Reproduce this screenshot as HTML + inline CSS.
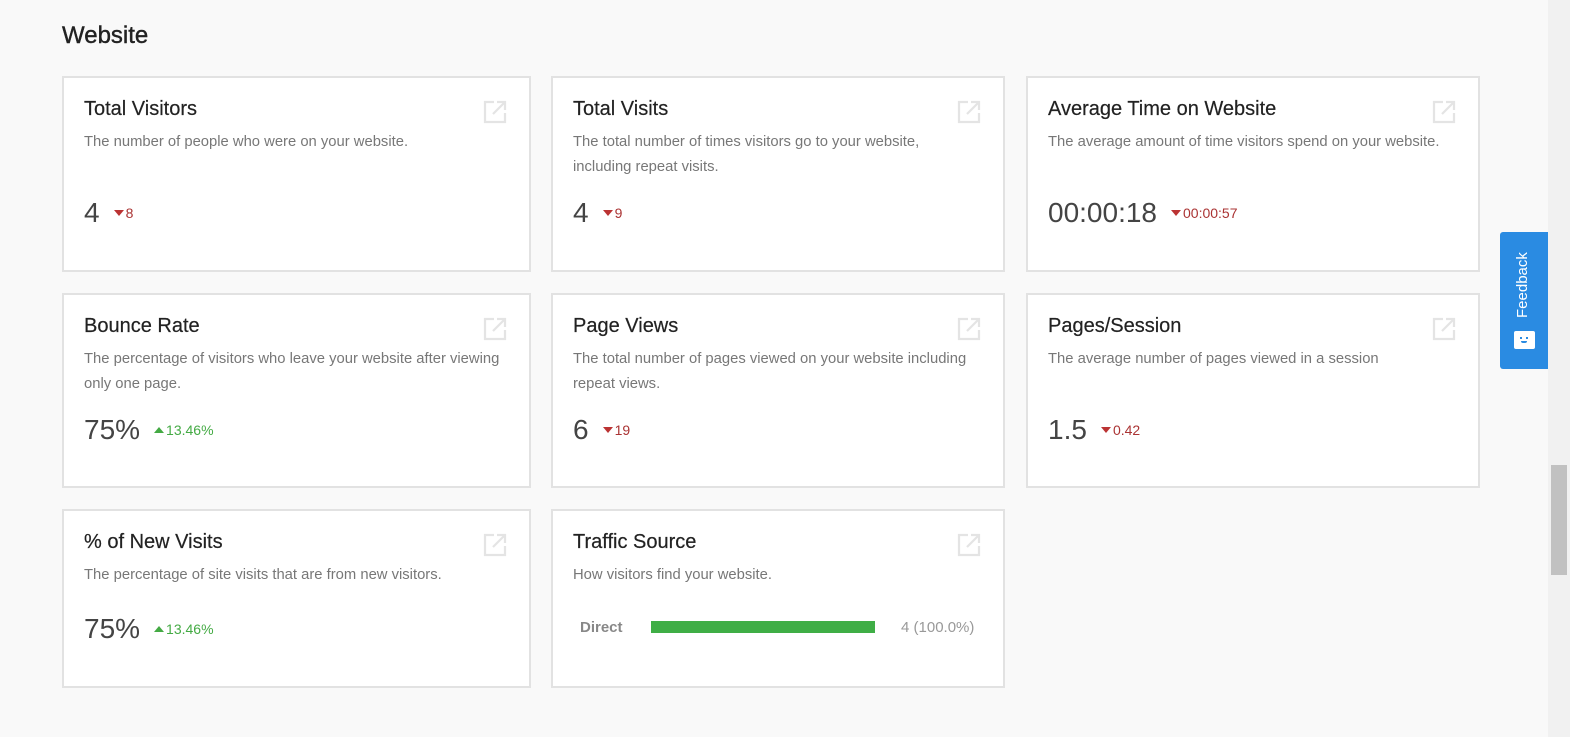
<!DOCTYPE html><html><head><style>
body{margin:0;width:1570px;height:737px;background:#f9f9f9;font-family:"Liberation Sans",sans-serif;position:relative;overflow:hidden}
h1{position:absolute;left:62px;top:22px;margin:0;font-size:24px;font-weight:normal;color:#222;-webkit-text-stroke:.4px #222}
.c{position:absolute;background:#fff;border:2px solid #e2e2e2;box-sizing:border-box}
.t{position:absolute;left:20px;top:20px;font-size:20px;color:#222;-webkit-text-stroke:.2px #222}
.d{position:absolute;left:20px;top:52px;right:30px;font-size:14.8px;color:#777;line-height:25px}
.v{position:absolute;left:20px;font-size:28px;color:#444;white-space:nowrap}
.v span{font-size:14px;margin-left:14px;vertical-align:4px}
.v span:before{content:"";display:inline-block;border-left:5px solid transparent;border-right:5px solid transparent;margin-right:2px;vertical-align:2px}
.dn{color:#a33}.dn:before{border-top:6px solid #b33}
.up{color:#4a4}.up:before{border-bottom:6px solid #4a4}
.i{position:absolute;right:22px;top:22px}
.sb{position:absolute;left:1548px;top:0;width:22px;height:737px;background:#f1f1f1}
.th{position:absolute;left:1551px;top:465px;width:16px;height:110px;background:#c1c1c1}
.fb{position:absolute;left:1500px;top:232px;width:48px;height:137px;background:#2a8be2;border-radius:3px 0 0 3px}
</style></head><body>
<h1>Website</h1>
<svg width="0" height="0" style="position:absolute"><defs><symbol id="ic" viewBox="0 0 24 24"><path d="M11 2H2v20h20v-9" fill="none" stroke="#e4e4e4" stroke-width="2.2"/><path d="M14 2h8v8M22 2L10 14" fill="none" stroke="#e4e4e4" stroke-width="2.2"/></symbol></defs></svg>

<div class="c" style="left:62px;top:76px;width:469px;height:196px"><div class="t">Total Visitors</div><svg class="i" width="24" height="24"><use href="#ic"/></svg><div class="d">The number of people who were on your website.</div><div class="v" style="top:119px">4<span class="dn">8</span></div></div>
<div class="c" style="left:551px;top:76px;width:454px;height:196px"><div class="t">Total Visits</div><svg class="i" width="24" height="24"><use href="#ic"/></svg><div class="d">The total number of times visitors go to your website, including repeat visits.</div><div class="v" style="top:119px">4<span class="dn">9</span></div></div>
<div class="c" style="left:1026px;top:76px;width:454px;height:196px"><div class="t">Average Time on Website</div><svg class="i" width="24" height="24"><use href="#ic"/></svg><div class="d" style="right:10px">The average amount of time visitors spend on your website.</div><div class="v" style="top:119px">00:00:18<span class="dn">00:00:57</span></div></div>

<div class="c" style="left:62px;top:293px;width:469px;height:195px"><div class="t">Bounce Rate</div><svg class="i" width="24" height="24"><use href="#ic"/></svg><div class="d" style="right:8px">The percentage of visitors who leave your website after viewing only one page.</div><div class="v" style="top:119px">75%<span class="up">13.46%</span></div></div>
<div class="c" style="left:551px;top:293px;width:454px;height:195px"><div class="t">Page Views</div><svg class="i" width="24" height="24"><use href="#ic"/></svg><div class="d">The total number of pages viewed on your website including repeat views.</div><div class="v" style="top:119px">6<span class="dn">19</span></div></div>
<div class="c" style="left:1026px;top:293px;width:454px;height:195px"><div class="t">Pages/Session</div><svg class="i" width="24" height="24"><use href="#ic"/></svg><div class="d">The average number of pages viewed in a session</div><div class="v" style="top:119px">1.5<span class="dn">0.42</span></div></div>

<div class="c" style="left:62px;top:509px;width:469px;height:179px"><div class="t">% of New Visits</div><svg class="i" width="24" height="24"><use href="#ic"/></svg><div class="d">The percentage of site visits that are from new visitors.</div><div class="v" style="top:102px">75%<span class="up">13.46%</span></div></div>
<div class="c" style="left:551px;top:509px;width:454px;height:179px"><div class="t">Traffic Source</div><svg class="i" width="24" height="24"><use href="#ic"/></svg><div class="d">How visitors find your website.</div>
<div style="position:absolute;left:27px;top:108px;font-size:15px;font-weight:bold;color:#888">Direct</div>
<div style="position:absolute;left:98px;top:110px;width:224px;height:12px;background:#3fae46"></div>
<div style="position:absolute;left:348px;top:108px;font-size:15px;color:#999">4 (100.0%)</div></div>

<div class="sb"></div><div class="th"></div>
<div class="fb"><div style="position:absolute;left:14px;top:86px;transform:rotate(-90deg);transform-origin:0 0;color:#fff;font-size:15px;white-space:nowrap">Feedback</div>
<div style="position:absolute;left:14px;top:99px;width:21px;height:18px;background:#fff;border-radius:2px"><div style="position:absolute;left:6px;top:6px;width:2px;height:2px;background:#2a8be2"></div><div style="position:absolute;left:12px;top:6px;width:2px;height:2px;background:#2a8be2"></div><div style="position:absolute;left:7px;top:10px;width:6px;height:2px;border-bottom:2px solid #2a8be2;border-radius:0 0 3px 3px;box-sizing:border-box"></div></div></div>
</body></html>
